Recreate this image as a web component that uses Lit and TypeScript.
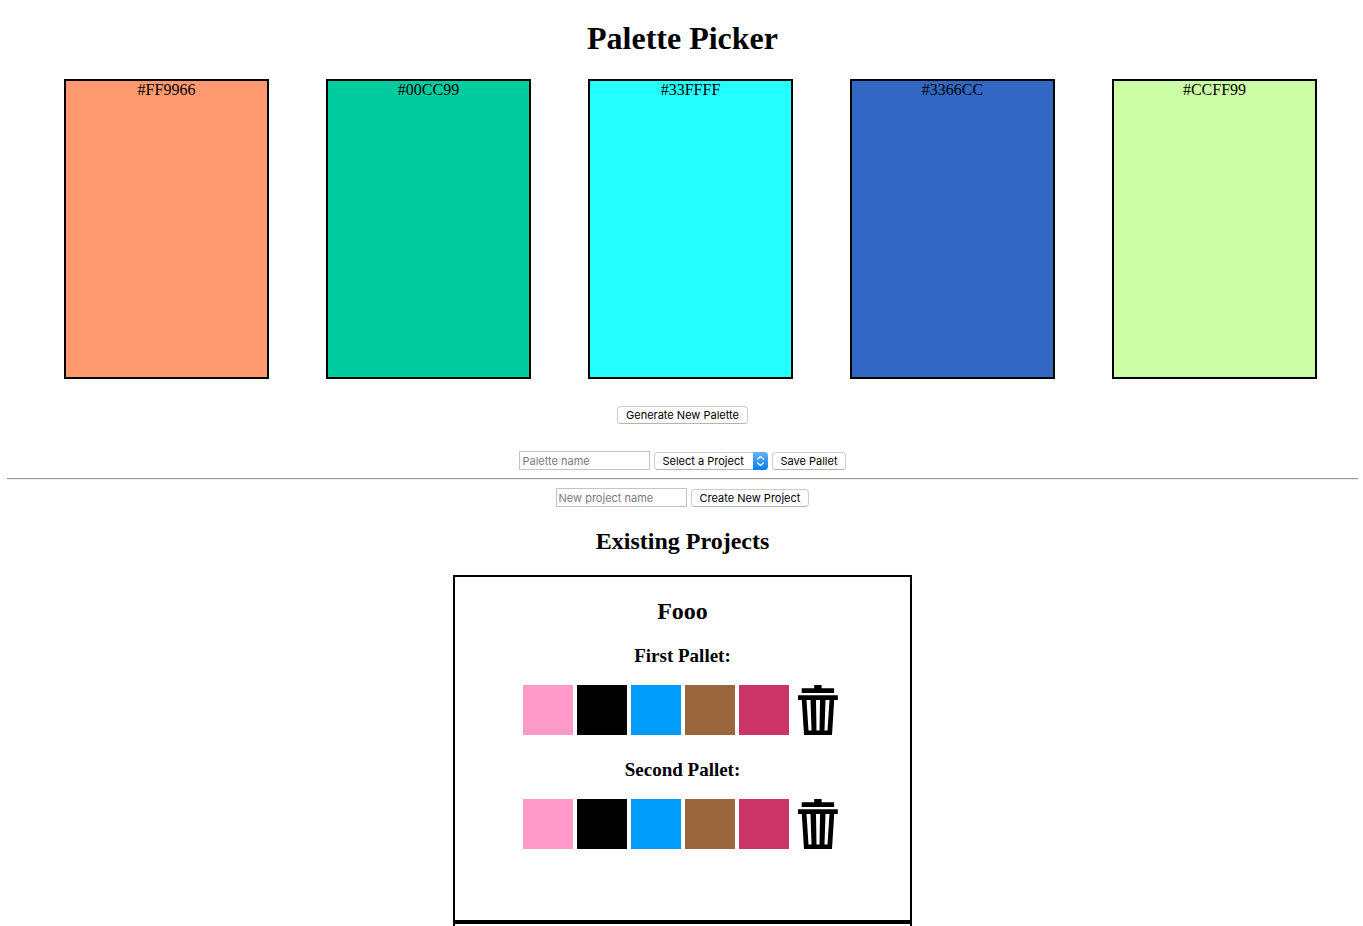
import { LitElement, html, css } from "lit";
import { customElement, property } from "lit/decorators.js";
import { styleMap } from "lit/directives/style-map.js";

interface Swatch {
  name: string;
  fill: string;
}

const GENERATED: Swatch[] = [
  { name: "#FF9966", fill: "#ff9970" },
  { name: "#00CC99", fill: "#00cca0" },
  { name: "#33FFFF", fill: "#24ffff" },
  { name: "#3366CC", fill: "#3268c3" },
  { name: "#CCFF99", fill: "#ccffa5" },
];

const SAVED = ["#ff99c8", "#000000", "#009cfb", "#99663e", "#cc3366"];

@customElement("palette-row")
export class PaletteRow extends LitElement {
  @property() name = "";
  @property({ attribute: false }) colors: string[] = [];

  static styles = css`
    :host {
      display: block;
    }
    .name {
      margin: 0;
      font-size: 19px;
      line-height: 21px;
      font-weight: bold;
    }
    .row {
      display: flex;
      justify-content: center;
      gap: 4px;
      margin: 19px 0 24px;
      padding-left: 1px;
    }
    .swatch {
      width: 50px;
      height: 50px;
    }
    .trash {
      width: 50px;
      height: 50px;
      padding: 0;
      border: 0;
      background: none;
      cursor: pointer;
    }
    .trash svg {
      display: block;
    }
  `;

  render() {
    return html`
      <h3 class="name">${this.name}:</h3>
      <div class="row">
        ${this.colors.map(
          (c) => html`<div class="swatch" style=${styleMap({ background: c })}></div>`
        )}
        <button class="trash" type="button" aria-label="Delete palette">
          <svg width="50" height="50" viewBox="0 0 50 50" aria-hidden="true">
            <path d="M8.700 3.300H21.200V0H28.600V3.300H41.100V8H8.700Z" />
            <path
              fill-rule="evenodd"
              d="M5 10.300H44.800V15H41.200L39 50H11L8.800 15H5ZM13.500 15L15.500 45.500H18.500L17.500 15ZM23 15L23.500 45.500H26.500L27 15ZM32.500 15L31.500 45.500H34.500L36.500 15Z"
            />
          </svg>
        </button>
      </div>
    `;
  }
}

@customElement("app-root")
export class AppRoot extends LitElement {
  static styles = css`
    :host {
      display: block;
      box-sizing: border-box;
      height: 100vh;
      overflow: hidden;
      padding: 20px 5px 0 7px;
      background: #fff;
      color: #000;
      font: 16px/18px "Liberation Serif", "Times New Roman", serif;
      text-align: center;
    }
    h1 {
      margin: 0 0 22px;
      font-size: 32px;
      line-height: 37px;
    }
    h2 {
      margin: 0;
      font-size: 24px;
      line-height: 28px;
    }
    .colors {
      display: flex;
      gap: 57px;
      padding: 0 41px 0 57px;
    }
    .color {
      flex: 1;
      box-sizing: border-box;
      height: 300px;
      border: 2px solid #000;
    }
    .controls {
      display: flex;
      justify-content: center;
      align-items: flex-end;
      gap: 4px;
    }
    .generate {
      margin: 27px 0;
    }
    button,
    input,
    select {
      box-sizing: border-box;
      margin: 0;
      font: 11px/14px Inter, sans-serif;
      color: #000;
    }
    button,
    select {
      height: 18px;
      padding: 0 7px;
      border: 1px solid #cdcdcd;
      border-bottom-color: #b4b4b4;
      border-radius: 4px;
      background: #fff;
    }
    .wide {
      padding: 0 8px;
    }
    input {
      width: 131px;
      height: 19px;
      padding: 1px 2px;
      border: 1px solid #c4c4c4;
      border-radius: 0;
      background: #fff;
    }
    input::placeholder {
      color: #7b7b7b;
      opacity: 1;
    }
    .picker {
      position: relative;
      display: flex;
    }
    select {
      width: 114px;
      appearance: none;
    }
    .stepper {
      position: absolute;
      top: 0;
      right: 0;
      pointer-events: none;
    }
    hr {
      margin: 8px 0;
      height: 2px;
      border: 0;
      box-sizing: border-box;
      border-top: 1px solid #989898;
      border-bottom: 1px solid #ececec;
    }
    .heading {
      margin: 20px 0;
    }
    .project {
      box-sizing: border-box;
      width: 34%;
      min-height: 347px;
      margin: 0 auto;
      padding: 20px 0;
      border: 2px solid #000;
    }
    .title {
      margin-bottom: 20px;
    }
  `;

  render() {
    return html`
      <h1>Palette Picker</h1>
      <div class="colors">
        ${GENERATED.map(
          (c) => html`<div class="color" style=${styleMap({ background: c.fill })}>${c.name}</div>`
        )}
      </div>
      <div class="controls generate">
        <button class="wide" type="button">Generate New Palette</button>
      </div>
      <form class="controls" @submit=${(e: Event) => e.preventDefault()}>
        <input type="text" placeholder="Palette name" aria-label="Palette name" />
        <span class="picker">
          <select aria-label="Project">
            <option>Select a Project</option>
            <option>Fooo</option>
          </select>
          <svg class="stepper" width="15" height="18" viewBox="0 0 15 18" aria-hidden="true">
            <defs>
              <linearGradient id="blue" x1="0" y1="0" x2="0" y2="1">
                <stop offset="0" stop-color="#64b2f8" />
                <stop offset="1" stop-color="#087dfb" />
              </linearGradient>
            </defs>
            <path d="M0 0H11Q15 0 15 4V14Q15 18 11 18H0Z" fill="url(#blue)" />
            <path
              d="M4.700 7L7.500 4.500L10.300 7M4.700 11L7.500 13.500L10.300 11"
              fill="none"
              stroke="#fff"
              stroke-width="1.300"
              stroke-linecap="round"
              stroke-linejoin="round"
            />
          </svg>
        </span>
        <button type="submit">Save Pallet</button>
      </form>
      <hr />
      <form class="controls" @submit=${(e: Event) => e.preventDefault()}>
        <input type="text" placeholder="New project name" aria-label="New project name" />
        <button class="wide" type="submit">Create New Project</button>
      </form>
      <h2 class="heading">Existing Projects</h2>
      <section class="project">
        <h2 class="title">Fooo</h2>
        <palette-row name="First Pallet" .colors=${SAVED}></palette-row>
        <palette-row name="Second Pallet" .colors=${SAVED}></palette-row>
      </section>
      <section class="project"></section>
    `;
  }
}
